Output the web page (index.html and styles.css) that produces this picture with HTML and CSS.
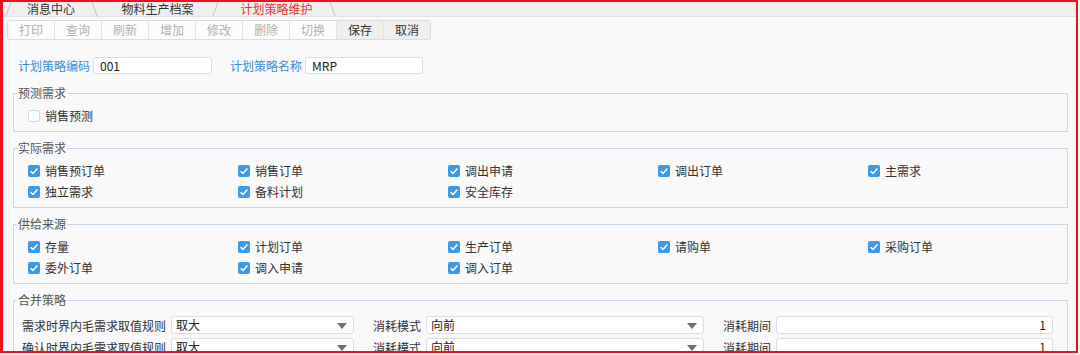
FILE: index.html
```html
<!DOCTYPE html>
<html lang="zh-CN">
<head>
    <meta charset="UTF-8">
    <title>计划策略维护</title>
    <link rel="stylesheet" href="styles.css">
</head>
<body>
    <div class="frame">
        <div class="tabbar">
            <div class="tab first">消息中心</div>
            <div class="tab second">物料生产档案</div>
            <div class="tab active">计划策略维护</div>
        </div>

        <div class="toolbar">
            <span class="btn off">打印</span>
            <span class="btn off">查询</span>
            <span class="btn off">刷新</span>
            <span class="btn off">增加</span>
            <span class="btn off">修改</span>
            <span class="btn off">删除</span>
            <span class="btn off">切换</span>
            <span class="btn on">保存</span>
            <span class="btn on">取消</span>
        </div>

        <div class="head-row">
            <label class="field-label">计划策略编码</label>
            <div class="input code">001</div>
            <label class="field-label second">计划策略名称</label>
            <div class="input name">MRP</div>
        </div>

        <fieldset class="group">
            <legend>预测需求</legend>
            <div class="opts">
                <div class="opt"><span class="box"></span>销售预测</div>
            </div>
        </fieldset>

        <fieldset class="group">
            <legend>实际需求</legend>
            <div class="opts">
                <div class="opt"><span class="box checked"><svg viewBox="0 0 12 12"><path d="M2.6 6.2 L5 8.4 L9.4 3.6"/></svg></span>销售预订单</div>
                <div class="opt"><span class="box checked"><svg viewBox="0 0 12 12"><path d="M2.6 6.2 L5 8.4 L9.4 3.6"/></svg></span>销售订单</div>
                <div class="opt"><span class="box checked"><svg viewBox="0 0 12 12"><path d="M2.6 6.2 L5 8.4 L9.4 3.6"/></svg></span>调出申请</div>
                <div class="opt"><span class="box checked"><svg viewBox="0 0 12 12"><path d="M2.6 6.2 L5 8.4 L9.4 3.6"/></svg></span>调出订单</div>
                <div class="opt"><span class="box checked"><svg viewBox="0 0 12 12"><path d="M2.6 6.2 L5 8.4 L9.4 3.6"/></svg></span>主需求</div>
                <div class="opt"><span class="box checked"><svg viewBox="0 0 12 12"><path d="M2.6 6.2 L5 8.4 L9.4 3.6"/></svg></span>独立需求</div>
                <div class="opt"><span class="box checked"><svg viewBox="0 0 12 12"><path d="M2.6 6.2 L5 8.4 L9.4 3.6"/></svg></span>备料计划</div>
                <div class="opt"><span class="box checked"><svg viewBox="0 0 12 12"><path d="M2.6 6.2 L5 8.4 L9.4 3.6"/></svg></span>安全库存</div>
            </div>
        </fieldset>

        <fieldset class="group">
            <legend>供给来源</legend>
            <div class="opts">
                <div class="opt"><span class="box checked"><svg viewBox="0 0 12 12"><path d="M2.6 6.2 L5 8.4 L9.4 3.6"/></svg></span>存量</div>
                <div class="opt"><span class="box checked"><svg viewBox="0 0 12 12"><path d="M2.6 6.2 L5 8.4 L9.4 3.6"/></svg></span>计划订单</div>
                <div class="opt"><span class="box checked"><svg viewBox="0 0 12 12"><path d="M2.6 6.2 L5 8.4 L9.4 3.6"/></svg></span>生产订单</div>
                <div class="opt"><span class="box checked"><svg viewBox="0 0 12 12"><path d="M2.6 6.2 L5 8.4 L9.4 3.6"/></svg></span>请购单</div>
                <div class="opt"><span class="box checked"><svg viewBox="0 0 12 12"><path d="M2.6 6.2 L5 8.4 L9.4 3.6"/></svg></span>采购订单</div>
                <div class="opt"><span class="box checked"><svg viewBox="0 0 12 12"><path d="M2.6 6.2 L5 8.4 L9.4 3.6"/></svg></span>委外订单</div>
                <div class="opt"><span class="box checked"><svg viewBox="0 0 12 12"><path d="M2.6 6.2 L5 8.4 L9.4 3.6"/></svg></span>调入申请</div>
                <div class="opt"><span class="box checked"><svg viewBox="0 0 12 12"><path d="M2.6 6.2 L5 8.4 L9.4 3.6"/></svg></span>调入订单</div>
            </div>
        </fieldset>

        <fieldset class="group merge">
            <legend>合并策略</legend>
            <div class="merge-rows">
                <div class="merge-row">
                    <span class="rule-label">需求时界内毛需求取值规则</span>
                    <div class="select wide">取大<span class="arrow"></span></div>
                    <span class="mode-label">消耗模式</span>
                    <div class="select mode">向前<span class="arrow"></span></div>
                    <span class="mode-label">消耗期间</span>
                    <div class="input period">1</div>
                </div>
                <div class="merge-row">
                    <span class="rule-label">确认时界内毛需求取值规则</span>
                    <div class="select wide">取大<span class="arrow"></span></div>
                    <span class="mode-label">消耗模式</span>
                    <div class="select mode">向前<span class="arrow"></span></div>
                    <span class="mode-label">消耗期间</span>
                    <div class="input period">1</div>
                </div>
            </div>
        </fieldset>
    </div>
</body>
</html>
```

FILE: styles.css
```css
body {
    margin: 0;
    background-color: #f4f4f4;
    font-family: "Noto Sans CJK SC", "Liberation Sans", sans-serif;
    font-size: 12px;
    color: #333;
}
.frame {
    box-sizing: border-box;
    width: 1078px;
    height: 353px;
    border: 2px solid #e8131b;
    border-left-width: 3px;
    background-color: #f9f9f9;
    overflow: hidden;
}

/* tabs */
.tabbar {
    display: flex;
    height: 14px;
    background-color: #efefef;
    border-bottom: 1px solid #e2e2e2;
    padding-left: 2px;
}
.tab {
    position: relative;
    line-height: 14px;
    text-align: center;
    color: #333;
}
.tab::after {
    content: "";
    position: absolute;
    top: 0;
    right: 2px;
    width: 1px;
    height: 14px;
    background-color: #c4c4c4;
    transform: skewX(20deg);
}
.tab.first {
    width: 92px;
}
.tab.first::before {
    content: "";
    position: absolute;
    top: 0;
    left: 3px;
    width: 1px;
    height: 14px;
    background-color: #c4c4c4;
    transform: skewX(-20deg);
}
.tab.second {
    width: 121px;
}
.tab.second::after {
    transform: skewX(-20deg);
}
.tab.active {
    width: 117px;
    color: #e8333a;
}

/* toolbar */
.toolbar {
    display: flex;
    margin: 3px 0 0 4px;
    width: max-content;
    height: 18px;
    border: 1px solid #dcdcdc;
    border-radius: 3px;
    background-color: #fcfcfc;
    overflow: hidden;
}
.btn {
    box-sizing: border-box;
    width: 47px;
    line-height: 18px;
    text-align: center;
    border-left: 1px solid #e3e3e3;
}
.btn:first-child {
    border-left: none;
    width: 46px;
}
.btn.off {
    color: #b2b2b2;
}
.btn.on {
    color: #333;
    background-color: #efefef;
}

/* head fields */
.head-row {
    display: flex;
    align-items: center;
    margin-top: 17px;
    padding-left: 15px;
    height: 17px;
}
.field-label {
    color: #3b8dd8;
    margin-right: 3px;
}
.field-label.second {
    margin-left: 18px;
}
.input {
    box-sizing: border-box;
    height: 17px;
    line-height: 15px;
    padding: 0 6px;
    background-color: #fff;
    border: 1px solid #dedede;
    border-radius: 3px;
    color: #222;
}
.input.code {
    width: 119px;
}
.input.name {
    width: 118px;
}

/* groups */
.group {
    margin: 11px 8px 0 10px;
    padding: 0 0 0 3px;
    border: 1px solid #c9d7e6;
    min-inline-size: 0;
}
.group + .group {
    margin-top: 8px;
}
.group legend {
    padding: 0 1px;
    line-height: 16px;
    color: #555;
}
.opts {
    display: grid;
    grid-template-columns: repeat(5, 210px);
    grid-auto-rows: 21px;
    padding: 4px 0 5px 11px;
}
.opt {
    display: flex;
    align-items: center;
    gap: 5px;
}
.box {
    box-sizing: border-box;
    width: 12px;
    height: 12px;
    border: 1px solid #d6d6d6;
    border-radius: 2px;
    background-color: #fff;
}
.box.checked {
    border: none;
    background-color: #3c9ae6;
}
.box svg {
    display: block;
    width: 12px;
    height: 12px;
    fill: none;
    stroke: #fff;
    stroke-width: 1.5;
}

/* merge strategy */
.merge-rows {
    display: flex;
    flex-direction: column;
    gap: 4px;
    padding: 8px 0 0 5px;
}
.merge-row {
    display: flex;
    align-items: center;
    height: 18px;
}
.rule-label {
    width: 144px;
    margin-right: 5px;
}
.mode-label {
    margin-left: 19px;
    margin-right: 5px;
}
.select {
    position: relative;
    box-sizing: border-box;
    height: 18px;
    line-height: 16px;
    padding: 0 4px;
    background-color: #fff;
    border: 1px solid #dedede;
    border-radius: 3px;
    color: #222;
}
.select.wide {
    width: 183px;
}
.select.mode {
    width: 278px;
}
.arrow {
    position: absolute;
    right: 6px;
    top: 6px;
    border-left: 5px solid transparent;
    border-right: 5px solid transparent;
    border-top: 6px solid #707070;
}
.input.period {
    width: 277px;
    height: 18px;
    line-height: 16px;
    text-align: right;
}
```
